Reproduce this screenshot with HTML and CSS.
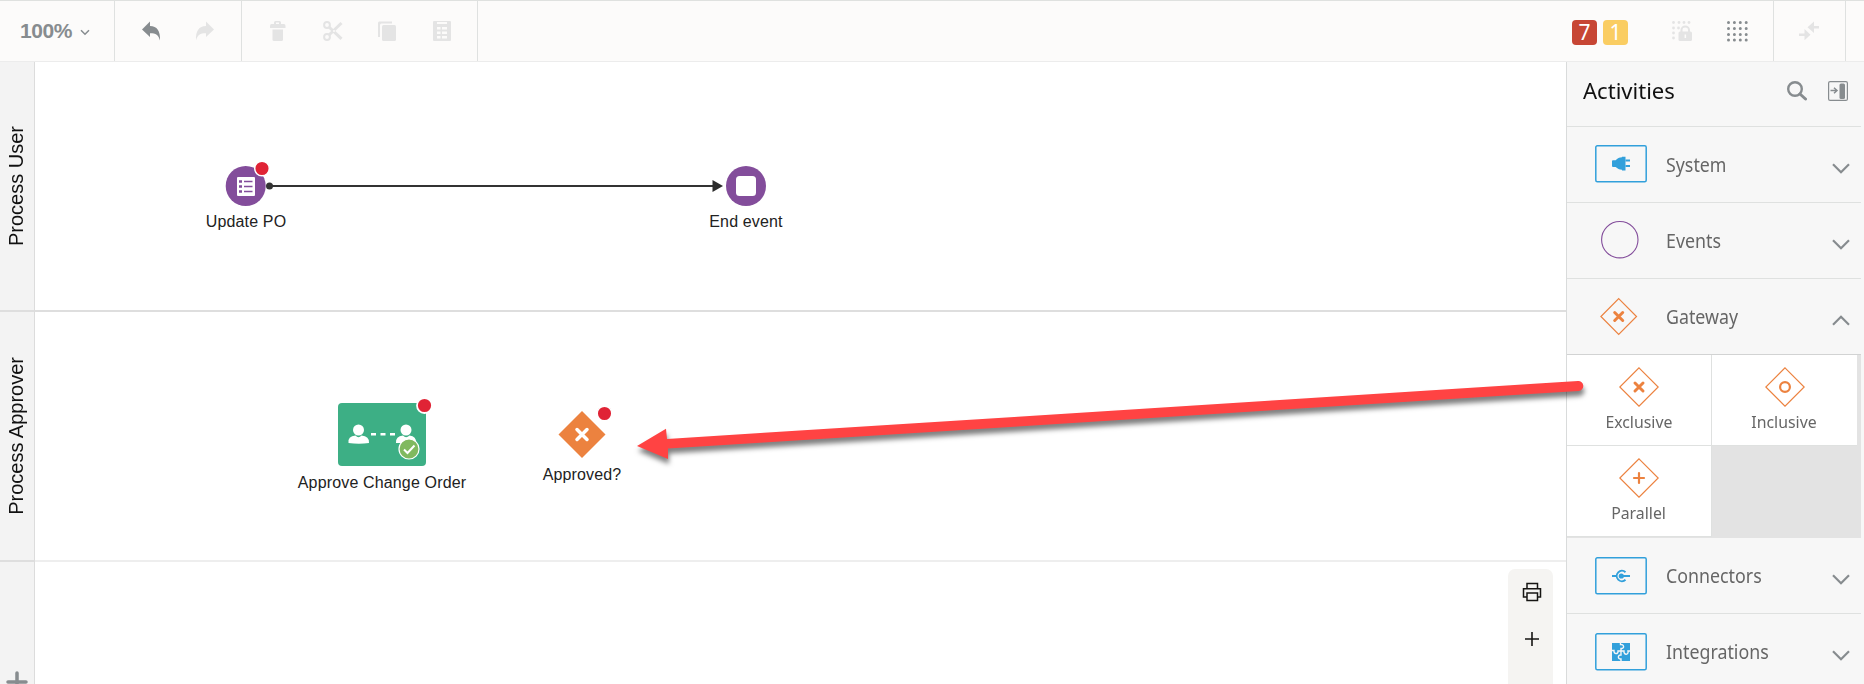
FILE: index.html
```html
<!DOCTYPE html>
<html lang="en">
<head>
<meta charset="utf-8">
<title>Process editor</title>
<link rel="stylesheet" href="styles.css">
</head>
<body>
<div class="app">
  <header class="toolbar">
    <div class="group zoom"><span class="zoom-text">100%</span>
      <svg class="zoom-caret" width="10" height="7" viewBox="0 0 10 7"><path d="M1 1.200L5 5.200L9 1.200" fill="none" stroke="#878c8f" stroke-width="1.500"/></svg>
    </div>
    <div class="group history">
      <svg width="20" height="20" viewBox="0 0 20 20"><path d="M1 8.500L9 .5V5C16 5 19.500 10 19 19.500C17.500 14 15 12.200 9 12.200V16Z" fill="#878c8f"/></svg>
      <svg width="20" height="20" viewBox="0 0 20 20"><path d="M19 8.500L11 .5V5C4 5 .5 10 1 19.500C2.500 14 5 12.200 11 12.200V16Z" fill="#e4e4e4"/></svg>
    </div>
    <div class="group edit">
      <svg width="20" height="20" viewBox="0 0 20 20"><g fill="#e4e4e4"><path d="M6 3V1.500Q6 0 7.500 0H11.500Q13 0 13 1.500V3H16Q17.500 3 17.500 5V7H2V5Q2 3 3.500 3ZM8 3H11V1.500H8Z" fill-rule="evenodd"/><path d="M4.500 8.500H15V18.500Q15 20 13.500 20H6Q4.500 20 4.500 18.500Z"/></g></svg>
      <svg width="20" height="20" viewBox="0 0 20 20"><g fill="none" stroke="#e4e4e4"><circle cx="4" cy="4" r="2.900" stroke-width="2"/><circle cx="4" cy="16" r="2.900" stroke-width="2"/><path d="M6 6L18.500 17.800" stroke-width="3"/><path d="M6 14L18.500 2" stroke-width="3"/></g><circle cx="11" cy="10" r="1" fill="#fcfbfa"/></svg>
      <svg width="20" height="20" viewBox="0 0 20 20"><path d="M1 16V2Q1 .5 2.200 .5H15V2.500H4.500Q3 2.500 3 4V16Z" fill="#e4e4e4"/><rect x="5" y="4" width="14" height="16" rx="1.500" fill="#e4e4e4"/></svg>
      <svg width="20" height="20" viewBox="0 0 20 20"><rect x="1" y="0" width="18" height="20" rx="1" fill="#e4e4e4"/><g fill="#fcfbfa"><path d="M5 1h10v2H5zM5 6h3.500v2.500H5zM10 6h5v2.500h-5zM5 10.500h3.500V13H5zM10 10.500h5V13h-5zM5 15h3.500v2.500H5zM10 15h5v2.500h-5z"/></g></svg>
    </div>
    <div class="badges"><span class="badge error">7</span><span class="badge warning">1</span></div>
    <div class="grid-tools">
      <svg width="20" height="20" viewBox="0 0 20 20"><g fill="#e4e4e4"><circle cx="1.500" cy="1.500" r="1.400"/><circle cx="7" cy="1.500" r="1.400"/><circle cx="12" cy="1.500" r="1.400"/><circle cx="17" cy="1.500" r="1.400"/><circle cx="1.500" cy="7" r="1.400"/><circle cx="6.500" cy="7" r="1.400"/><circle cx="1.500" cy="12" r="1.400"/><circle cx="1.500" cy="17" r="1.400"/><rect x="6.500" y="10.500" width="13.500" height="9.500" rx="1.500"/></g><path d="M9.500 11V9A3.700 3.400 0 0 1 17 9V11" fill="none" stroke="#e4e4e4" stroke-width="2"/><path d="M12.600 13.500h1.500v3.500h-1.500z" fill="#fcfbfa"/></svg>
      <svg width="22" height="22" viewBox="0 0 22 22"><path d="M2.500 2.500H21M2.500 8.500H21M2.500 14.500H21M2.500 20H21" stroke="#878c8f" stroke-width="3" stroke-linecap="round" stroke-dasharray="0 5.900"/></svg>
    </div>
    <div class="group collapse"><svg width="20" height="20" viewBox="0 0 20 20"><g fill="#e4e4e4"><path d="M8.500 6.300L15 .5V5H20V7.600H15V12Z"/><path d="M11.500 13.700L5.500 8V12.500H0V15H5.500V19.300Z"/></g></svg></div>
    <div class="tail"></div>
  </header>
  <div class="workspace">
    <aside class="lanes">
      <div class="lane"><span class="lane-name">Process User</span></div>
      <div class="lane"><span class="lane-name">Process Approver</span></div>
      <div class="lane-add"><svg width="22" height="22" viewBox="0 0 22 22"><path d="M11 2V20M2 11H20" stroke="#878c8f" stroke-width="3.500" stroke-linecap="round"/></svg></div>
    </aside>
    <main class="canvas">
      <div class="row first"></div>
      <div class="row second"></div>
      <svg class="node flow" width="470" height="20" viewBox="0 0 470 20"><path d="M5 10H450" stroke="#333" stroke-width="2"/><circle cx="4.500" cy="10" r="3.500" fill="#333"/><path d="M447.500 4V16L458 10Z" fill="#2b2b2b"/></svg>
      <svg class="node start" width="60" height="50" viewBox="0 0 60 50"><circle cx="20.700" cy="25" r="20" fill="#834d9b"/><rect x="12" y="16" width="18" height="19" rx="1" fill="#fff"/><path d="M14 20.500h3M14 25.500h3M14 30.500h3" stroke="#834d9b" stroke-width="2.400"/><path d="M19 20.500h8.500M19 25.500h8.500M19 30.500h8.500" stroke="#834d9b" stroke-width="1.400"/><circle cx="37" cy="7.500" r="7.300" fill="#e02335" stroke="#fff" stroke-width="1.500"/></svg>
      <span class="node label l-start">Update PO</span>
      <svg class="node end" width="42" height="42" viewBox="0 0 42 42"><circle cx="21" cy="21" r="20" fill="#834d9b"/><rect x="11" y="11" width="20" height="20" rx="3.500" fill="#fff"/></svg>
      <span class="node label l-end">End event</span>
      <svg class="node approve" width="100" height="70" viewBox="0 0 100 70"><rect x="0" y="5" width="88" height="63" rx="4" fill="#3daf85"/><g fill="#fff"><circle cx="20.500" cy="32" r="5.500"/><path d="M10.500 45Q9.500 38 17.500 37.500Q20.500 41 23.500 37.500Q31.500 38 31 45Q21 46.500 10.500 45Z"/><circle cx="68" cy="32" r="5.500"/><path d="M58 45Q57.500 38 65 37.500Q68 41 71.500 37.500Q78.500 38 78 45Z"/></g><path d="M33 36.300h25" stroke="#fff" stroke-width="2.500" stroke-dasharray="5 4.500"/><circle cx="71" cy="51" r="10" fill="#80b95f" stroke="#fff" stroke-width="1.200"/><path d="M66 51.500L69.500 55L76.500 47.500" fill="none" stroke="#fff" stroke-width="2"/><circle cx="86.500" cy="7.500" r="7.500" fill="#e02335" stroke="#fff" stroke-width="1.800"/></svg>
      <span class="node label l-approve">Approve Change Order</span>
      <svg class="node gateway" width="56" height="54" viewBox="0 0 56 54"><path d="M24 5L47.500 28.500L24 52L.5 28.500Z" fill="#ec823f"/><path d="M19 23.500L29 33.500M29 23.500L19 33.500" stroke="#fff" stroke-width="3.500" stroke-linecap="round"/><circle cx="46.500" cy="7.500" r="7.300" fill="#e02335" stroke="#fff" stroke-width="1.500"/></svg>
      <span class="node label l-gateway">Approved?</span>
      <div class="tools">
        <svg width="20" height="20" viewBox="0 0 20 20"><g fill="none" stroke="#161513" stroke-width="1.500"><path d="M5 6V1.500H15.500V6M5 15H1.500V6.800H18.500V15H15.500"/><rect x="5" y="11" width="10.500" height="7.500"/></g></svg>
        <svg width="14" height="14" viewBox="0 0 14 14"><path d="M7 0V14M0 7H14" stroke="#161513" stroke-width="1.600"/></svg>
      </div>
    </main>
    <aside class="panel">
      <div class="panel-head"><h1>Activities</h1>
        <svg class="search" width="20" height="20" viewBox="0 0 20 20"><circle cx="8" cy="8" r="6.800" fill="none" stroke="#878c8f" stroke-width="2.400"/><path d="M13 13L18.500 18" stroke="#878c8f" stroke-width="3" stroke-linecap="round"/></svg>
        <svg width="20" height="20" viewBox="0 0 20 20"><rect x=".6" y=".6" width="18.800" height="18.800" rx="1.500" fill="none" stroke="#878c8f" stroke-width="1.200"/><rect x="11.500" y="2.500" width="5.500" height="15.500" rx="1.500" fill="#878c8f"/><path d="M2.500 9.500H8M6 6.800L9 9.500L6 12.300" fill="none" stroke="#878c8f" stroke-width="1.500"/></svg>
      </div>
      <div class="item"><svg class="pic" width="52" height="42" viewBox="0 0 52 42"><rect class="frame" x=".8" y="3.800" width="50.400" height="36" rx="1.500"/><g fill="#32a0db"><path d="M17 19Q17 18.300 18 18.300H20C22 18.300 22 15.500 27 15.300V14.800H30.500V28.500H27V27.800C22 27.600 22 25 20 25H18Q17 25 17 24Z"/><path d="M30.500 17.500H35V19.500H30.500zM30.500 23H35V25H30.500z"/></g></svg><span class="name">System</span><svg class="caret" width="18" height="11" viewBox="0 0 18 11"><path d="M1 1.200L9 9.200L17 1.200"/></svg></div>
      <div class="item"><svg class="pic" width="52" height="42" viewBox="0 0 52 42"><circle cx="24.800" cy="21.700" r="18.200" fill="none" stroke="#834d9b" stroke-width="1.100"/></svg><span class="name">Events</span><svg class="caret" width="18" height="11" viewBox="0 0 18 11"><path d="M1 1.200L9 9.200L17 1.200"/></svg></div>
      <div class="item open"><svg class="pic" width="52" height="42" viewBox="0 0 52 42"><path d="M23.700 3.700L41.500 21.500L23.700 39.300L5.900 21.500Z" fill="none" stroke="#ec823f" stroke-width="1.200"/><path d="M19.700 17.500L27.700 25.500M27.700 17.500L19.700 25.500" stroke="#ec823f" stroke-width="3"  stroke-linecap="round"/></svg><span class="name">Gateway</span><svg class="caret" width="18" height="11" viewBox="0 0 18 11"><path d="M1 9.800L9 1.800L17 9.800"/></svg></div>
      <div class="cells">
        <div class="cell"><svg width="40" height="40" viewBox="0 0 40 40"><path class="diamond" d="M20 .8L39.200 20L20 39.200L.8 20Z"/><path class="sign" d="M16 16L24 24M24 16L16 24"/></svg><span class="cell-name">Exclusive</span></div>
        <div class="cell"><svg width="40" height="40" viewBox="0 0 40 40"><path class="diamond" d="M20 .8L39.200 20L20 39.200L.8 20Z"/><circle cx="20" cy="20" r="4.900" fill="none" stroke="#ec823f" stroke-width="2.200"/></svg><span class="cell-name">Inclusive</span></div>
        <div class="cell"><svg width="40" height="40" viewBox="0 0 40 40"><path class="diamond" d="M20 .8L39.200 20L20 39.200L.8 20Z"/><path class="sign plus" d="M20 15V25M15 20H25"/></svg><span class="cell-name">Parallel</span></div>
      </div>
      <div class="item low"><svg class="pic" width="52" height="42" viewBox="0 0 52 42"><rect class="frame" x=".8" y="3.800" width="50.400" height="36" rx="1.500"/><g fill="none" stroke="#32a0db" stroke-width="1.900"><path d="M30.500 18.200A5.200 5.200 0 1 0 30.500 25.800M17 22H21M26 22H35"/></g><circle cx="26.300" cy="22" r="2.600" fill="#32a0db"/></svg><span class="name">Connectors</span><svg class="caret" width="18" height="11" viewBox="0 0 18 11"><path d="M1 1.200L9 9.200L17 1.200"/></svg></div>
      <div class="item low"><svg class="pic" width="52" height="42" viewBox="0 0 52 42"><rect class="frame" x=".8" y="3.800" width="50.400" height="36" rx="1.500"/><rect x="17" y="13" width="18" height="18" fill="#32a0db"/><path d="M25.500 13V14.500C29.500 14 29.500 19 26 18.500V25C22.500 24.500 22.500 29.500 26 29V31M17 20.500H19C18.500 24.500 23.500 24.500 23 21H29C28.500 25.500 34 25 33 21H35" fill="none" stroke="#f7f7f7" stroke-width="1.400"/></svg><span class="name">Integrations</span><svg class="caret" width="18" height="11" viewBox="0 0 18 11"><path d="M1 1.200L9 9.200L17 1.200"/></svg></div>
    </aside>
  </div>
  <svg class="callout" width="970" height="110" viewBox="0 0 970 110"><path d="M7 76L36 58.800L37 69L948 11A5 5 0 0 1 948.600 21L38 78.500L38 89Z" fill="#ff4343"/></svg>
</div>
</body>
</html>
```

FILE: styles.css
```css
* { box-sizing: border-box; }
body { margin: 0; background: #fff; font-family: "Liberation Sans", Arial, sans-serif; }
svg { display: block; flex: none; }
.app { position: relative; width: 1864px; height: 684px; overflow: hidden; display: flex; flex-direction: column; }
.toolbar { height: 62px; flex: none; display: flex; background: #fcfbfa; border-top: 1px solid #dfe1df; border-bottom: 1px solid #ececec; }
.group { display: flex; flex: none; align-items: center; border-right: 1px solid #dfe1e0; }
.zoom { width: 115px; padding-left: 20px; }
.zoom-text { font-size: 21px; font-weight: bold; color: #878c8f; letter-spacing: -.4px; }
.zoom-caret { margin: 2px 0 0 8px; }
.history { width: 127px; padding-left: 26px; gap: 34px; }
.edit { width: 236px; padding-left: 26px; gap: 34.500px; }
.badges { flex: none; margin-left: 1094px; display: flex; gap: 6px; padding-top: 19px; }
.badge { width: 25px; height: 25px; border-radius: 4px; color: #fff; font: 21px/25px "Noto Sans", sans-serif; text-align: center; }
.error { background: #c74634; }
.warning { background: #facd62; }
.grid-tools { flex: none; display: flex; align-items: center; margin-left: 44px; gap: 34px; width: 102px; border-right: 1px solid #dfe1e0; }
.collapse { width: 72px; padding-left: 25px; }
.workspace { flex: 1; min-height: 0; display: flex; }
.lanes { width: 35px; background: #f3f3f3; border-right: 1px solid #dcdcdc; }
.lane { height: 250px; display: flex; align-items: center; justify-content: center; border-bottom: 2px solid #dedede; }
.lane-name { writing-mode: vertical-rl; transform: rotate(180deg); font-size: 20px; line-height: 34px; margin-right: 2px; color: #111; white-space: nowrap; }
.lane-add { padding: 109px 0 0 6px; }
.canvas { position: relative; width: 1531px; }
.row { height: 250px; border-bottom: 2px solid #dedede; }
.second { border-color: #eee; }
.node { position: absolute; }
.label { width: 220px; text-align: center; font-size: 16px; line-height: 20px; letter-spacing: .15px; color: #222; }
.flow { left: 230px; top: 114px; }
.start { left: 190px; top: 99px; }
.l-start { left: 101px; top: 150px; }
.end { left: 690px; top: 103px; }
.l-end { left: 601px; top: 150px; }
.approve { left: 303px; top: 336px; }
.l-approve { left: 237px; top: 411px; }
.gateway { left: 523px; top: 344px; }
.l-gateway { left: 437px; top: 403px; }
.tools { position: absolute; left: 1473px; top: 507px; width: 45px; height: 120px; border-radius: 7px 7px 0 0; background: #f5f4f2; display: flex; flex-direction: column; align-items: center; padding: 13px 0 0 2px; gap: 30px; }
.panel { width: 298px; border-left: 1px solid #d9dbdb; background: #f7f7f7; padding-right: 3px; font-family: "Noto Sans", sans-serif; }
.panel-head { height: 65px; display: flex; align-items: center; padding: 0 13px 6px 16px; border-bottom: 1px solid #dfe1e0; }
.panel-head h1 { margin: -2px 0 0; font-size: 22.500px; font-weight: 400; color: #111; width: 205px; transform: scaleX(.98); transform-origin: left; }
.search { margin-right: 21px; }
.item { height: 76px; display: flex; align-items: center; padding-left: 28px; border-bottom: 1px solid #dfe1e0; }
.pic { margin-top: -4px; }
.low .pic { margin-top: -2px; }
.open .pic { margin-top: -2px; }
.name { width: 147px; margin-left: 19px; color: #666; font-size: 20px; transform: scaleX(.89); transform-origin: left; }
.caret { margin: 8px 0 0 19px; }
.caret path { fill: none; stroke: #878c8f; stroke-width: 2.200; }
.frame { fill: none; stroke: #32a0db; stroke-width: 1.500; }
.open { border-color: #d2d3d3; }
.cells { display: grid; grid-template-columns: 145px 145px; grid-template-rows: 91px 91px; background: #e3e3e3; height: 183px; }
.cell { background: #fff; display: flex; flex-direction: column; align-items: center; padding-top: 12px; border-right: 1px solid #dfe1e0; border-bottom: 1px solid #dfe1e0; }
.cell:nth-child(2) { border-right: 0; }
.cell-name { font-size: 16.500px; line-height: 24px; margin-top: 3px; color: #666; transform: scaleX(.96); }
.diamond { fill: none; stroke: #ec823f; stroke-width: 1.200; }
.sign { stroke: #ec823f; stroke-width: 3; stroke-linecap: round; }
.plus { stroke-width: 2.200; }
.callout { position: absolute; left: 630px; top: 370px; filter: drop-shadow(1px 5px 2.500px rgba(0,0,0,.5)); }
```
